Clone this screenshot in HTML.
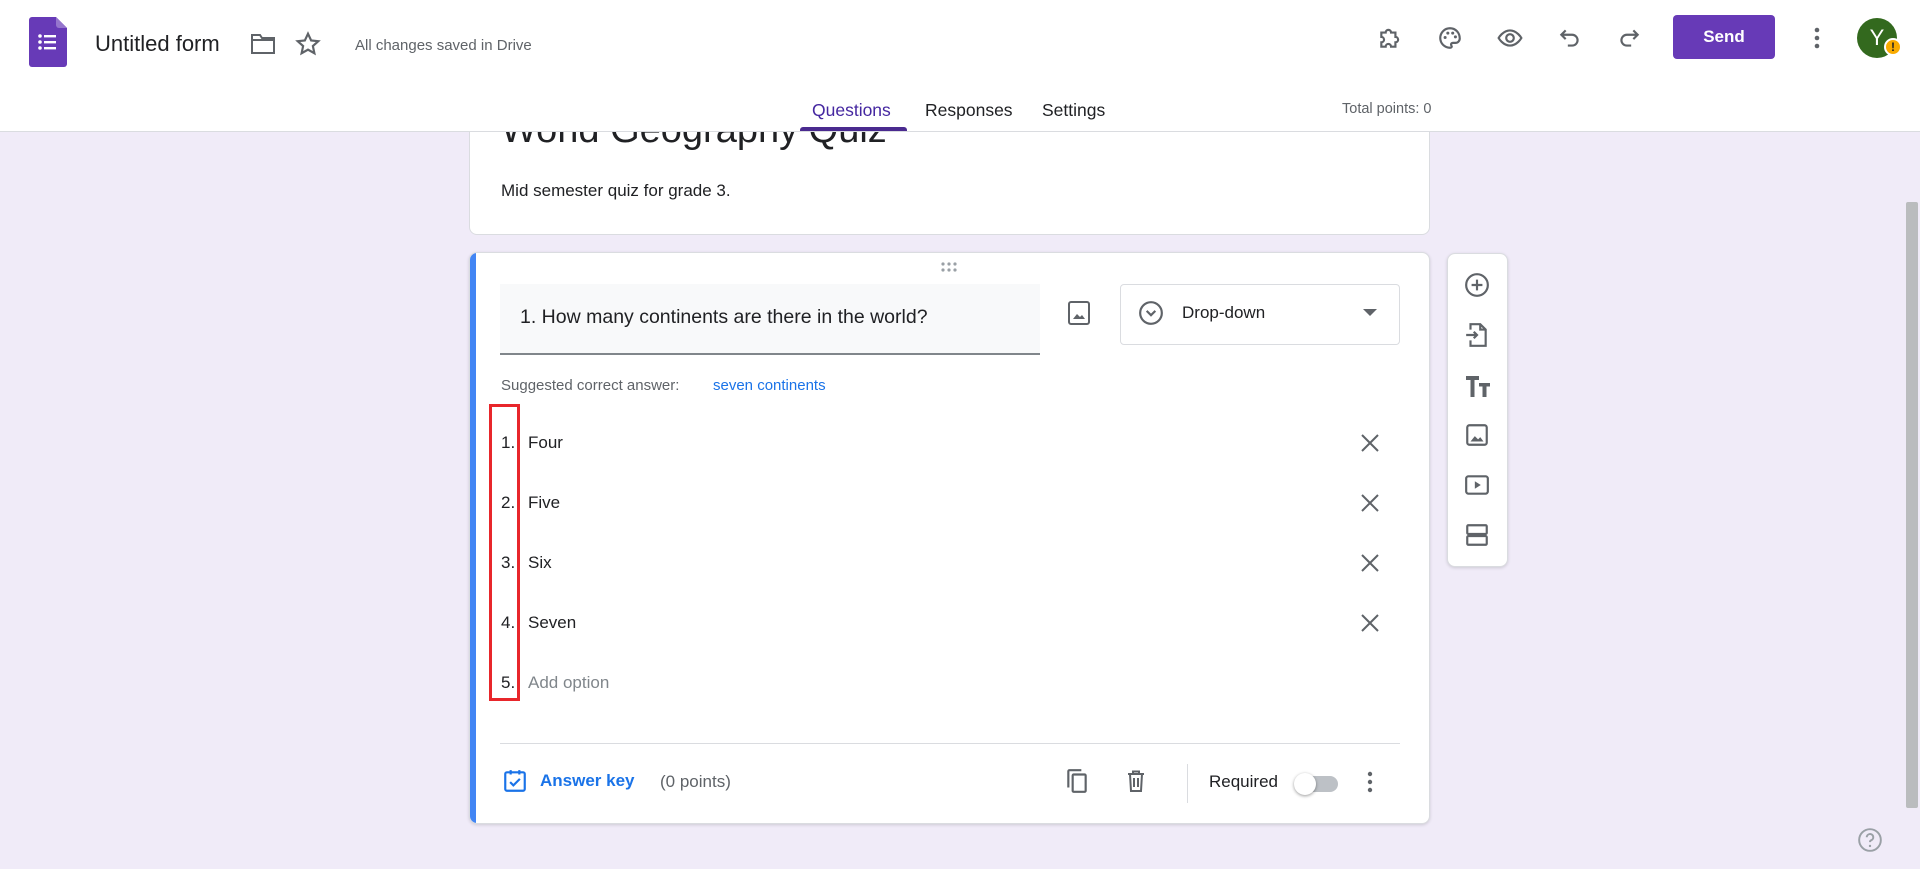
<!DOCTYPE html>
<html><head><meta charset="utf-8"><style>
*{box-sizing:border-box;margin:0;padding:0}
body{width:1920px;height:869px;overflow:hidden;background:#f0ebf8;font-family:"Liberation Sans",Arial,sans-serif;color:#202124;position:relative}
.abs{position:absolute}
svg{display:block}
.hdr{left:0;top:0;width:1920px;height:132px;background:#fff;border-bottom:1px solid #dadce0;z-index:5}
.ic{fill:none;stroke:#5f6368;stroke-width:2}
.opt{font-size:17px;color:#202124}
</style></head><body>
<div class="abs hdr">
  <svg class="abs" style="left:29px;top:17px" width="38" height="50" viewBox="0 0 38 50"><path d="M3 0h24l11 11v36a3 3 0 0 1-3 3H3a3 3 0 0 1-3-3V3a3 3 0 0 1 3-3z" fill="#673ab7"/><path d="M27 0l11 11H30a3 3 0 0 1-3-3z" fill="#9575cd"/><g fill="#fff"><circle cx="11" cy="19" r="1.8"/><circle cx="11" cy="25" r="1.8"/><circle cx="11" cy="31" r="1.8"/><rect x="15" y="18" width="12" height="2.4"/><rect x="15" y="24" width="12" height="2.4"/><rect x="15" y="30" width="12" height="2.4"/></g></svg>
  <div class="abs" style="left:95px;top:31px;font-size:22px">Untitled form</div>
  <svg class="abs" style="left:250px;top:32px" width="26" height="24" viewBox="0 0 26 24"><path class="ic" d="M2 3h8l2 3h12v15H2z"/><path class="ic" d="M2 8h22"/></svg>
  <svg class="abs" style="left:295px;top:31px" width="26" height="26" viewBox="0 0 24 24"><path class="ic" stroke-width="1.7" d="M12 2.5l2.9 6.2 6.6.7-5 4.5 1.4 6.6L12 17.2l-5.9 3.3 1.4-6.6-5-4.5 6.6-.7z"/></svg>
  <div class="abs" style="left:355px;top:37px;font-size:15px;color:#5f6368">All changes saved in Drive</div>

  <svg class="abs" style="left:1377px;top:25px" width="26" height="26" viewBox="0 0 24 24"><path class="ic" d="M4 7h4a2.5 2.5 0 0 1 5 0h4v4a2.5 2.5 0 0 1 0 5v4h-4a2.5 2.5 0 0 0-5 0H4v-4a2.5 2.5 0 0 0 0-5z"/></svg>
  <svg class="abs" style="left:1437px;top:25px" width="26" height="26" viewBox="0 0 24 24"><path class="ic" d="M12 3a9 9 0 0 0 0 18c1.5 0 2-1 1.3-2-.8-1.2 0-2.5 1.5-2.5H17a4 4 0 0 0 4-4C21 7 17 3 12 3z"/><g fill="#5f6368"><circle cx="7.5" cy="11.5" r="1.4"/><circle cx="10" cy="7.5" r="1.4"/><circle cx="14.5" cy="7.5" r="1.4"/><circle cx="17" cy="11" r="1.4"/></g></svg>
  <svg class="abs" style="left:1496px;top:25px" width="28" height="26" viewBox="0 0 24 24"><path class="ic" d="M1.5 12s4-7 10.5-7 10.5 7 10.5 7-4 7-10.5 7S1.5 12 1.5 12z"/><circle class="ic" cx="12" cy="12" r="3.5"/></svg>
  <svg class="abs" style="left:1557px;top:25px" width="26" height="26" viewBox="0 0 24 24"><path class="ic" d="M8 5L4 9l4 4M4 9h10a5 5 0 0 1 0 10h-4"/></svg>
  <svg class="abs" style="left:1616px;top:25px" width="26" height="26" viewBox="0 0 24 24"><path class="ic" d="M16 5l4 4-4 4M20 9H10a5 5 0 0 0 0 10h4"/></svg>
  <div class="abs" style="left:1673px;top:15px;width:102px;height:44px;background:#673ab7;border-radius:4px;color:#fff;font-weight:bold;font-size:17px;text-align:center;line-height:44px">Send</div>
  <svg class="abs" style="left:1811px;top:26px" width="12" height="24"><g fill="#5f6368"><circle cx="6" cy="4" r="2.3"/><circle cx="6" cy="12" r="2.3"/><circle cx="6" cy="20" r="2.3"/></g></svg>
  <div class="abs" style="left:1857px;top:18px;width:40px;height:40px;border-radius:50%;background:#33691e;color:#fff;font-size:22px;text-align:center;line-height:40px">Y</div>
  <div class="abs" style="left:1884px;top:38px;width:18px;height:18px;border-radius:50%;background:#f9ab00;border:2px solid #fff;color:#202124;font-size:12px;font-weight:bold;text-align:center;line-height:14px">!</div>

  <div class="abs" style="left:812px;top:100px;font-size:17.5px;color:#4527a0">Questions</div>
  <div class="abs" style="left:800px;top:127px;width:107px;height:4px;background:#4a2a8f;border-radius:3px 3px 0 0"></div>
  <div class="abs" style="left:925px;top:100px;font-size:17.5px">Responses</div>
  <div class="abs" style="left:1042px;top:100px;font-size:17.5px">Settings</div>
  <div class="abs" style="left:1342px;top:101px;font-size:14.5px;color:#5f6368">Total points: 0</div>
</div>

<div class="abs" style="left:469px;top:90px;width:961px;height:145px;background:#fff;border:1px solid #dadce0;border-radius:8px;overflow:hidden">
  <div class="abs" style="left:31px;top:20px;font-size:38px;line-height:38px;white-space:nowrap">World Geography Quiz</div>
  <div class="abs" style="left:31px;top:90px;font-size:17px">Mid semester quiz for grade 3.</div>
</div>

<div class="abs" style="left:469px;top:252px;width:961px;height:572px;background:#fff;border:1px solid #dadce0;border-radius:8px;box-shadow:0 1px 3px rgba(0,0,0,.15);overflow:hidden">
  <div class="abs" style="left:0;top:0;width:6px;height:572px;background:#4285f4"></div>
</div>
<svg class="abs" style="left:940px;top:261px" width="20" height="12"><g fill="#9aa0a6"><circle cx="3" cy="3" r="1.6"/><circle cx="9" cy="3" r="1.6"/><circle cx="15" cy="3" r="1.6"/><circle cx="3" cy="9" r="1.6"/><circle cx="9" cy="9" r="1.6"/><circle cx="15" cy="9" r="1.6"/></g></svg>
<div class="abs" style="left:500px;top:284px;width:540px;height:71px;background:#f8f9fa;border-bottom:2px solid #80868b"></div>
<div class="abs" style="left:520px;top:306px;font-size:19.5px">1. How many continents are there in the world?</div>
<svg class="abs" style="left:1067px;top:300px" width="24" height="26" viewBox="0 0 24 26"><rect x="2" y="2" width="20" height="22" rx="2" fill="none" stroke="#5f6368" stroke-width="2"/><path d="M6 19l4-5 3 3 2-2 3 4z" fill="#5f6368"/></svg>
<div class="abs" style="left:1120px;top:284px;width:280px;height:61px;border:1px solid #dadce0;border-radius:4px"></div>
<svg class="abs" style="left:1138px;top:300px" width="26" height="26" viewBox="0 0 24 24"><circle class="ic" cx="12" cy="12" r="10"/><path class="ic" d="M8 10l4 4 4-4"/></svg>
<div class="abs" style="left:1182px;top:303px;font-size:17px">Drop-down</div>
<svg class="abs" style="left:1363px;top:309px" width="14" height="8"><path d="M0 0h14L7 7z" fill="#5f6368"/></svg>

<div class="abs" style="left:501px;top:377px;font-size:15px;color:#5f6368">Suggested correct answer:</div>
<div class="abs" style="left:713px;top:377px;font-size:15px;color:#1a73e8">seven continents</div>

<div class="abs opt" style="left:501px;top:433px">1.</div><div class="abs opt" style="left:528px;top:433px">Four</div>
<div class="abs opt" style="left:501px;top:493px">2.</div><div class="abs opt" style="left:528px;top:493px">Five</div>
<div class="abs opt" style="left:501px;top:553px">3.</div><div class="abs opt" style="left:528px;top:553px">Six</div>
<div class="abs opt" style="left:501px;top:613px">4.</div><div class="abs opt" style="left:528px;top:613px">Seven</div>
<div class="abs opt" style="left:501px;top:673px">5.</div><div class="abs opt" style="left:528px;top:673px;color:#80868b">Add option</div>
<svg class="abs" style="left:1359px;top:432px" width="22" height="22" viewBox="0 0 22 22"><path class="ic" d="M3 3l16 16M19 3L3 19"/></svg>
<svg class="abs" style="left:1359px;top:492px" width="22" height="22" viewBox="0 0 22 22"><path class="ic" d="M3 3l16 16M19 3L3 19"/></svg>
<svg class="abs" style="left:1359px;top:552px" width="22" height="22" viewBox="0 0 22 22"><path class="ic" d="M3 3l16 16M19 3L3 19"/></svg>
<svg class="abs" style="left:1359px;top:612px" width="22" height="22" viewBox="0 0 22 22"><path class="ic" d="M3 3l16 16M19 3L3 19"/></svg>
<div class="abs" style="left:489px;top:404px;width:31px;height:297px;border:3px solid #e8262b"></div>

<div class="abs" style="left:500px;top:743px;width:900px;height:1px;background:#dadce0"></div>
<svg class="abs" style="left:502px;top:768px" width="26" height="26" viewBox="0 0 24 24"><rect x="3" y="4" width="18" height="17" rx="1.5" fill="none" stroke="#1a73e8" stroke-width="2"/><path d="M8 2v4M16 2v4" stroke="#1a73e8" stroke-width="2"/><path d="M7.5 13l3 3 6-6" fill="none" stroke="#1a73e8" stroke-width="2"/></svg>
<div class="abs" style="left:540px;top:771px;font-size:17px;color:#1a73e8;font-weight:bold">Answer key</div>
<div class="abs" style="left:660px;top:772px;font-size:17px;color:#5f6368">(0 points)</div>
<svg class="abs" style="left:1064px;top:768px" width="26" height="26" viewBox="0 0 24 24"><rect class="ic" x="8" y="6" width="12" height="16" rx="1"/><path class="ic" d="M4 18V3a1 1 0 0 1 1-1h11"/></svg>
<svg class="abs" style="left:1124px;top:768px" width="24" height="26" viewBox="0 0 24 24"><path class="ic" d="M4 5h16M9 5V2.5h6V5M6 5l1 17h10l1-17M10 9v9M14 9v9"/></svg>
<div class="abs" style="left:1187px;top:764px;width:1px;height:39px;background:#dadce0"></div>
<div class="abs" style="left:1209px;top:772px;font-size:17px">Required</div>
<div class="abs" style="left:1298px;top:776px;width:40px;height:16px;border-radius:8px;background:#bdc1c6"></div>
<div class="abs" style="left:1294px;top:773px;width:22px;height:22px;border-radius:50%;background:#fff;box-shadow:0 1px 3px rgba(0,0,0,.4)"></div>
<svg class="abs" style="left:1364px;top:770px" width="12" height="24"><g fill="#5f6368"><circle cx="6" cy="4" r="2.2"/><circle cx="6" cy="12" r="2.2"/><circle cx="6" cy="20" r="2.2"/></g></svg>

<div class="abs" style="left:1447px;top:253px;width:61px;height:314px;background:#fff;border:1px solid #dadce0;border-radius:8px;box-shadow:0 1px 3px rgba(0,0,0,.15)"></div>
<svg class="abs" style="left:1464px;top:272px" width="26" height="26" viewBox="0 0 24 24"><circle class="ic" cx="12" cy="12" r="10"/><path class="ic" d="M12 7v10M7 12h10"/></svg>
<svg class="abs" style="left:1464px;top:322px" width="26" height="26" viewBox="0 0 24 24"><path class="ic" d="M6 7V2h9l5 5v15H6v-5M15 2v5h5M2 12h10M9 9l3 3-3 3"/></svg>
<svg class="abs" style="left:1464px;top:373px" width="28" height="26" viewBox="0 0 28 26"><path d="M2 3h13v4h-4.5v17h-4V7H2zM15 10h11v3.5h-3.5V24h-4V13.5H15z" fill="#5f6368"/></svg>
<svg class="abs" style="left:1464px;top:422px" width="26" height="26" viewBox="0 0 24 24"><rect class="ic" x="3" y="3" width="18" height="18" rx="2"/><path d="M6 18l4-5 3 3 2-2 3 4z" fill="#5f6368"/></svg>
<svg class="abs" style="left:1464px;top:472px" width="26" height="26" viewBox="0 0 24 24"><rect class="ic" x="2" y="4" width="20" height="16" rx="2"/><path d="M10 8.5v7l5.5-3.5z" fill="#5f6368"/></svg>
<svg class="abs" style="left:1464px;top:522px" width="26" height="26" viewBox="0 0 24 24"><rect class="ic" x="3" y="3" width="18" height="8" rx="1"/><rect class="ic" x="3" y="13" width="18" height="8" rx="1"/></svg>

<div class="abs" style="left:1906px;top:202px;width:12px;height:606px;background:#babcbe;border-radius:2px"></div>
<svg class="abs" style="left:1857px;top:827px" width="26" height="26" viewBox="0 0 24 24"><circle cx="12" cy="12" r="10" fill="none" stroke="#9aa0a6" stroke-width="1.8"/><path d="M9 9.5a3 3 0 1 1 4 2.8c-.7.3-1 .9-1 1.7" fill="none" stroke="#9aa0a6" stroke-width="1.8"/><circle cx="12" cy="17.5" r="1.1" fill="#9aa0a6"/></svg>
</body></html>
